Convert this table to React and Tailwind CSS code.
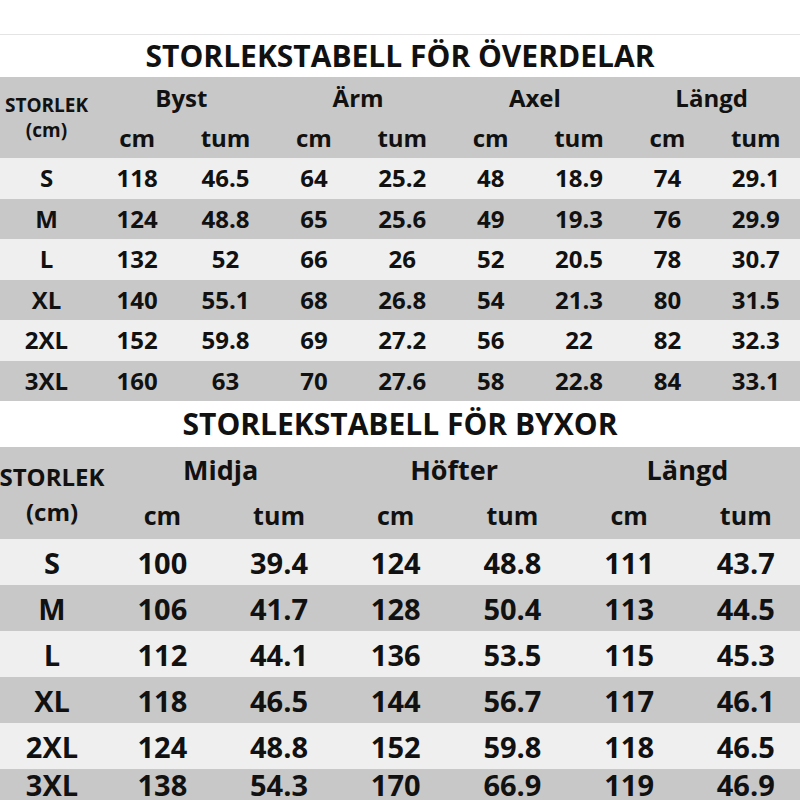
import React from 'react';

const tops = [
  ['S', '118', '46.5', '64', '25.2', '48', '18.9', '74', '29.1'],
  ['M', '124', '48.8', '65', '25.6', '49', '19.3', '76', '29.9'],
  ['L', '132', '52', '66', '26', '52', '20.5', '78', '30.7'],
  ['XL', '140', '55.1', '68', '26.8', '54', '21.3', '80', '31.5'],
  ['2XL', '152', '59.8', '69', '27.2', '56', '22', '82', '32.3'],
  ['3XL', '160', '63', '70', '27.6', '58', '22.8', '84', '33.1'],
];

const pants = [
  ['S', '100', '39.4', '124', '48.8', '111', '43.7'],
  ['M', '106', '41.7', '128', '50.4', '113', '44.5'],
  ['L', '112', '44.1', '136', '53.5', '115', '45.3'],
  ['XL', '118', '46.5', '144', '56.7', '117', '46.1'],
  ['2XL', '124', '48.8', '152', '59.8', '118', '46.5'],
  ['3XL', '138', '54.3', '170', '66.9', '119', '46.9'],
];

const App = () => {
  return (
    <div className="w-[800px] h-[800px] overflow-hidden bg-white text-[#111] font-bold" style={{ fontFamily: '"Open Sans", "Noto Sans", sans-serif' }}>
      <div className="h-[35px] border-b border-[#e4e4e4]" />

      {/* tops */}
      <div className="h-[42px] flex items-center justify-center text-[30px] leading-none">
        STORLEKSTABELL FÖR ÖVERDELAR
      </div>
      <div className="grid grid-cols-[93px_repeat(8,88.375px)] grid-rows-[41px_40px] bg-[#c8c8c8] items-center text-center">
        <div className="row-span-2 flex flex-col items-center text-[19px] leading-[25px]">
          <span>STORLEK</span>
          <span>(cm)</span>
        </div>
        <div className="col-span-2 text-[24px]">Byst</div>
        <div className="col-span-2 text-[24px]">Ärm</div>
        <div className="col-span-2 text-[24px]">Axel</div>
        <div className="col-span-2 text-[24px]">Längd</div>
        {['cm', 'tum', 'cm', 'tum', 'cm', 'tum', 'cm', 'tum'].map((u, i) => (
          <div key={i} className="text-[24px]">{u}</div>
        ))}
      </div>
      {tops.map((row, r) => (
        <div
          key={row[0]}
          className={`grid grid-cols-[93px_repeat(8,88.375px)] h-[40.5px] items-center text-center text-[24px] ${r % 2 ? 'bg-[#c8c8c8]' : 'bg-[#efefef]'}`}
        >
          {row.map((v, i) => (
            <div key={i}>{v}</div>
          ))}
        </div>
      ))}

      {/* pants */}
      <div className="h-[46px] flex items-center justify-center text-[30px] leading-none">
        STORLEKSTABELL FÖR BYXOR
      </div>
      <div className="grid grid-cols-[104px_repeat(6,116.7px)] grid-rows-[46px_46px] bg-[#c8c8c8] items-center text-center">
        <div className="row-span-2 flex flex-col items-center text-[24px] leading-[35px] pt-[2px]">
          <span>STORLEK</span>
          <span>(cm)</span>
        </div>
        <div className="col-span-2 text-[27px]">Midja</div>
        <div className="col-span-2 text-[27px]">Höfter</div>
        <div className="col-span-2 text-[27px]">Längd</div>
        {['cm', 'tum', 'cm', 'tum', 'cm', 'tum'].map((u, i) => (
          <div key={i} className="text-[25px]">{u}</div>
        ))}
      </div>
      {pants.map((row, r) => (
        <div
          key={row[0]}
          className={`grid grid-cols-[104px_repeat(6,116.7px)] items-center text-center text-[29px] leading-none ${r === 5 ? 'h-[31px]' : 'h-[46px]'} ${r % 2 ? 'bg-[#c8c8c8]' : 'bg-[#efefef]'}`}
        >
          {row.map((v, i) => (
            <div key={i}>{v}</div>
          ))}
        </div>
      ))}
    </div>
  );
};

export default App;
